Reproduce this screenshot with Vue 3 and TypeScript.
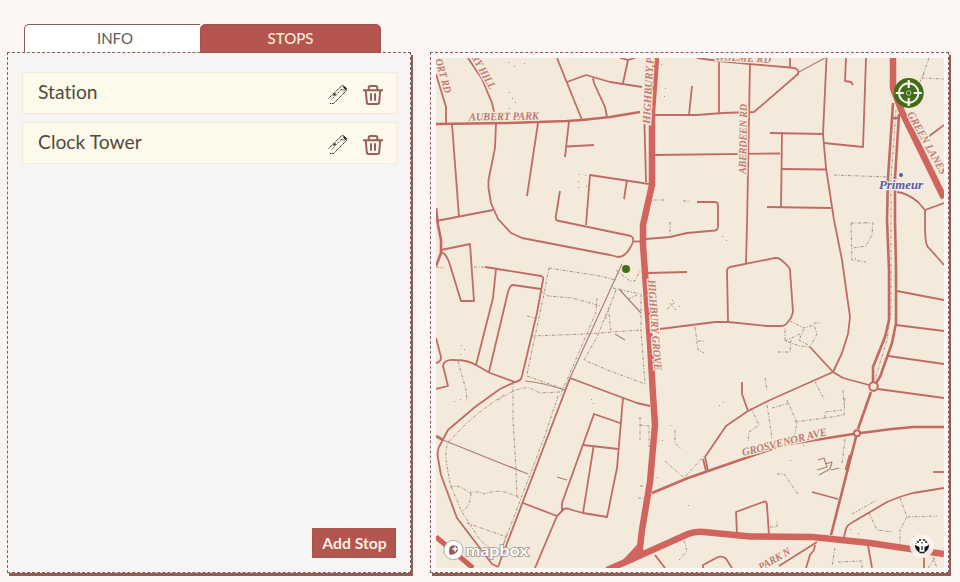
<script setup lang="ts">
import { ref } from 'vue'

interface Stop { id: number; name: string }
interface Label { text: string; x: number; y: number; angle: number; width: number; size: number }

const activeTab = ref<'info' | 'stops'>('stops')
const stops = ref<Stop[]>([
  { id: 1, name: 'Station' },
  { id: 2, name: 'Clock Tower' },
])

const removeStop = (id: number) => {
  stops.value = stops.value.filter((s) => s.id !== id)
}
const addStop = () => {
  stops.value.push({ id: Date.now(), name: 'New stop' })
}

// Residential streets
const streets: string[] = [
  'M436 74L446 107V123', 'M468 58L482 79L492 103L494 112',
  'M557 58L582 120', 'M567 82L586 75L610 82L642 87', 'M593 78L594 83L605 107L607 117',
  'M452 124L459 217', 'M496 124L495 148L488.500 180V188L491 203L498 219L511 233L522 238L610 255L618 257Q625 257 630 248Q636 239 631 236L557 220.500Q555 219 556 215L560 191',
  'M538 123L527 196', 'M569 121L565 157', 'M567 146.500L594 145', 'M586 225L590 175L649 184', 'M627 180L624 199',
  'M436 221L493 210', 'M441 250L470 244L474 301H461L450 265Q446 252 441 253',
  'M485 267L541 276Q544 277 543 280L537 313L522 376Q521 381 515 382L500 389L475 407L448 430L439 447Q437 452 438 458L441 475L457 518L492 564L498 567',
  'M496 269L493 298L476 365', 'M541 289L513 285Q510 285 508 292L489 372',
  'M436 389L448 386L443 366Q444 359 455 360Q468 360 476 365L490 373L515 382', 'M436 338L441 357Q441 362 436 363',
  'M570 378L498 567', 'M570 378L610 393L637 403L650 406',
  'M620 423L594 414L562 503L562 510Q566 507 572 510L583 513L607 517L617 468L623 398', 'M583 445L618 449', 'M593.500 447L583 513',
  'M523 503L557 516L564 509', 'M557 516L535 568',
  'M620 58L628 60L635 58', 'M628 60L623 83', 'M644.500 124L646 182',
  'M655 115H697L723 113L754 112L798 74Q800 68 790 67.500L750 64L719 61L697 58', 'M790 68V58',
  'M692 86L689 115', 'M719 61V113', 'M750 64L747 225L746 263', 'M655 155L780 153.500',
  'M770 133L823 134', 'M782 132L781 207', 'M767 207L831 208', 'M782 169L826 169.500',
  'M826.500 58L823 134L826 168L834 220L842 260L850 317L848 334L842 353L833 372',
  'M866 58L863 147L824 143', 'M846 58L845 81L851 82L853 85', 'M928 137L944 125',
  'M897 192Q907 193 918 202L925 210V225Q925 244 928 247L937 257L944 265', 'M925 210L944 203',
  'M897 291L944 300', 'M896 325L944 331', 'M888 356L944 364', 'M878 389L944 398',
  'M869 385L843 378L833 372L770 400L748 411L726 426L705 457L708 471', 'M810 347L833 372', 'M742 382V394L748 411', 'M703 459L706 471',
  'M933 472H944', 'M812 492L838 499', 'M844 537L846 529Q847 525 853 522L870 512L887 502Q901 496 913 493L944 488',
  'M737 534L736 512L763 502Q767 500 767 506L769 535', 'M655 555L665 568', 'M703 568V565L718 557Q725 555 728 562L732 568',
  'M779 566L817 542', 'M815 545L814 550L810 555L806 568', 'M868 545L872 568', 'M924 557V568',
  'M646 239L670 237L687 233L715 230.500Q718 230 718 226V205Q718 202 714 202H697', 'M634 241.500H643', 'M648 273L687 272',
  'M660 329L715 322H728L767 326H780Q785 326 787 323L791 318L793 312L790 270Q790 267 780 259Q777 257 770 259L730 267Q727 268 727 271L728 321',
]

// Wider local roads
const roads: string[] = [
  'M436 124L507 123L567 121L582 120L610 117L640 112', 'M893 103L888 178L887 220L889 270V320L885 337L873 367V382',
  'M899 114L895 178V220L896 270V323L892 343L880 377L876 383', 'M893 118H899',
  'M436 208L438 225L441 240V253L436 266', 'M436 436L443 440',
  'M652 493L688 478L780 446L790 444L853 434L892 429L913 427H944',
  'M871 392L858 429', 'M856 437L831 535', 'M850 455L846 470',
]

// Arterial roads
const mains: string[] = [
  'M656 58L652 112V185L643 225V245L650 343L653 395L655 425L650 482L642 530L640 548L630 561',
  'M607 570L630 560L688 534Q695 531 704 532L750 536.500L813 537L870 543L944 554',
  'M893 58V88L902 112L944 198',
]

const lanes: string[] = [
  'M622 264L600 312L570 378', 'M443 440L528 474', 'M799 72L825 58', 'M557 477L567 480', 'M525 381Q540 382 565 390',
  'M619 289L641 313', 'M615 334L625 340', 'M818 460L824 458L827 467L817 470M825 464L832 462L830 469L819 475M831 470L839 468',
]

// Footpaths, drawn as broken lines
const footpaths: string[] = [
  'M474 267L485 267', 'M436 267L444 268', 'M549 268L600 276L616 280', 'M549 268L544 294L527 374', 'M527 376L566 390',
  'M541 291L548 296L572 298L601 306', 'M531 336L586 334L641 330', 'M597 298L596 312L580 350L560 396', 'M609 307L597 337L584 360L610 371L645 384',
  'M641 294V330L645 384', 'M613 288L640 294', 'M616 290L605 320', 'M609 314L611 332', 'M616 270L630 281H635L640 271', 'M628 299L637 295',
  'M498 400Q522 384 532 389L540 393L560 392', 'M513 382V420L516 470L517 497', 'M558 396L544 438L504 543', 'M504 395Q485 407 468 422L450 440Q445 445 446 460L450 484L462 512L480 540L492 550H502L507 532',
  'M450 487Q460 484 469 493Q474 490 485 494Q501 487 519 498', 'M471 493Q470 509 461 511', 'M467 523L504 536', 'M458 361L466 390L467 402',
  'M654 200H665', 'M683 201H689', 'M670 222V237', 'M695 327L698 350L704 353M698 341H704',
  'M834 175L887 177', 'M896 110L891 178L891 310L887 340L875 379', 'M929 58L922 78L944 79M924 73L920 82',
  'M851 223L852 260L866 262M873 222L872 235L866 246L853 248M851 223H871',
  'M640 417V440M640 425L649 426V447', 'M665 461L684 478L704 456', 'M675 430L675 443L681 449', 'M682 534L687 551L679 560',
  'M790 321L804 328L814 325L817 334L810 347L800 346L785 341V328M804 329L799 340M814 323H820M778 352H790L791 340M785 341L800 334M799 340L808 345',
  'M815 382L824 399', 'M843 390L844 405', 'M751 408L759 425L749 432L748 441', 'M767 405L772 438', 'M787 400L797 423L795 434M772 408L790 403M795 422L825 418L844 415L845 397M825 418V412L842 410',
  'M845 439L842 464', 'M852 514L877 500', 'M869 513L877 530L893 532', 'M900 498L907 517L937 516M907 517L900 530V544', 'M835 548L832 566M838 562L862 561V568', 'M770 527H777V521',
  'M777 474H784L798 494', 'M765 378L767 390', 'M933 557L937 568M928 568L937 555', 'M527 316L535 318', 'M640 486H644M638 498H643', 'M670 303L676 310M667 309L675 302',
]

const specks: [number, number][] = [
  [508, 62], [514, 66], [524, 63], [509, 92], [512, 98], [515, 102], [509, 108], [579, 174], [585, 175], [578, 181], [586, 186], [578, 187], [661, 64],
  [665, 88], [664, 96], [670, 222], [461, 345], [464, 349], [460, 354], [454, 401], [460, 399], [591, 399], [593, 403], [722, 236], [726, 240], [723, 402], [719, 405],
  [670, 425], [672, 300], [679, 306], [657, 477], [662, 440], [688, 505], [947, 475], [855, 258], [864, 222], [790, 460], [803, 445], [947, 476], [850, 529], [858, 533],
]

const labels: Label[] = [
  { text: 'AUBERT PARK', x: 469, y: 120.5, angle: -1, width: 70, size: 11 },
  { text: 'ORT RD', x: 435, y: 60, angle: 74, width: 35, size: 11 },
  { text: 'RY HILL', x: 471, y: 57, angle: 60, width: 38, size: 11 },
  { text: 'HIGHBURY PA', x: 650, y: 124, angle: -87, width: 73, size: 11 },
  { text: 'ABERDEEN RD', x: 746, y: 174, angle: -89, width: 70, size: 11 },
  { text: 'HOLME RD', x: 716, y: 60, angle: 3, width: 55, size: 11 },
  { text: 'GREEN LANES', x: 907, y: 114, angle: 61, width: 70, size: 11 },
  { text: 'HIGHBURY GROVE', x: 648, y: 280, angle: 86, width: 91, size: 11 },
  { text: 'GROSVENOR AVE', x: 743, y: 456, angle: -14, width: 87, size: 11 },
  { text: 'PARK N', x: 761, y: 571, angle: -30, width: 35, size: 11 },
]
</script>

<template>
  <main class="page">
    <section class="left">
      <nav class="tabs">
        <button class="tab" :class="{ active: activeTab === 'info' }" @click="activeTab = 'info'">INFO</button>
        <button class="tab" :class="{ active: activeTab === 'stops' }" @click="activeTab = 'stops'">STOPS</button>
      </nav>
      <div class="panel stops">
        <ul class="list">
          <li v-for="stop in stops" :key="stop.id" class="stop">
            <span class="name">{{ stop.name }}</span>
            <button class="icon" aria-label="Edit">
              <svg width="20" height="20" viewBox="0 0 20 20" fill="none" stroke="#1d1916">
                <path d="M0 14V19H5L3 15Z" fill="#fff" stroke="none" />
                <path d="M0.500 13.500L13.500 1L15.500 .5L18.500 3.500V5.500L5.500 18.500" stroke-dasharray="1.400 .6" />
                <path d="M3.500 14.500L14.500 3.500L16 6L18 4M12.500 4L15.500 7" stroke-width=".8" stroke-dasharray="1.300 1" />
                <path d="M5.500 10.500L7.500 8.500M15.500 1.500L18 4.500" stroke-width="1.500" />
                <path d="M2 18.500H5.500" stroke-dasharray="1.200 1" />
              </svg>
            </button>
            <button class="icon" aria-label="Delete" @click="removeStop(stop.id)">
              <svg width="20" height="20" viewBox="0 0 20 20" fill="none" stroke="#98605a" stroke-width="2">
                <path d="M0 5.300H20M5.700 5V2.800Q5.700 1 7.500 1H12.500Q14.300 1 14.300 2.800V5M2.800 5.500L3.800 17.500Q4 19 5.500 19H14.500Q16 19 16.200 17.500L17.200 5.500M8 8.300V15.700M12 8.300V15.700" />
              </svg>
            </button>
          </li>
        </ul>
        <button class="add" @click="addStop">Add Stop</button>
      </div>
    </section>

    <section class="panel map-panel">
      <svg class="map" viewBox="436 58 508 510">
        <rect x="436" y="58" width="508" height="510" fill="#f3eadb" />
        <g class="foot"><path v-for="(d, i) in footpaths" :key="i" :d="d" /></g>
        <g class="speck"><rect v-for="(p, i) in specks" :key="i" :x="p[0]" :y="p[1]" width="1" height="1" /></g>
        <g class="lane"><path v-for="(d, i) in lanes" :key="i" :d="d" /></g>
        <g class="street"><path v-for="(d, i) in streets" :key="i" :d="d" /></g>
        <g class="road"><path v-for="(d, i) in roads" :key="i" :d="d" /></g>
        <g class="main-road"><path v-for="(d, i) in mains" :key="i" :d="d" /></g>
        <path d="M634 548L641 540L644 552L630 562L620 563Z" fill="#d1655e" />
        <path d="M436 537L473 568" stroke="#cd605a" stroke-width="5" />
        <g class="circle">
          <circle cx="873.500" cy="386.500" r="4.200" />
          <circle cx="857" cy="433.300" r="3" />
        </g>
        <g class="label">
          <text
            v-for="l in labels" :key="l.text" :font-size="l.size" :textLength="l.width" lengthAdjust="spacingAndGlyphs"
            :transform="`translate(${l.x} ${l.y}) rotate(${l.angle})`"
          >{{ l.text }}</text>
        </g>
        <circle cx="901" cy="175" r="2" fill="#5c5c98" />
        <text class="place" x="879" y="189" textLength="44" lengthAdjust="spacingAndGlyphs">Primeur</text>
        <circle cx="626" cy="269" r="4" fill="#42701a" />

        <g transform="translate(908.700 93)">
          <circle r="15" fill="#436d18" />
          <circle r="9.700" fill="none" stroke="#f5f5e8" stroke-width="2" />
          <path d="M0 -13V-5M0 13V5M-13 0H-5M13 0H5" stroke="#f5f5e8" stroke-width="2.200" />
          <circle r="2.300" fill="none" stroke="#c3cfae" stroke-width="1" />
        </g>

        <g class="brand">
          <circle cx="453.500" cy="550" r="9.600" fill="#fff" stroke="#a6968e" stroke-width=".8" />
          <path d="M449.500 554.500Q448 548 451 546Q454 544.500 457 546.500Q459 549 457 552Q454 555.500 449.500 554.500Z" fill="#9a5b57" />
          <path d="M455 545.500L456 548L458.500 549L456 550L455 552.500L454 550L451.500 549L454 548Z" fill="#fff" />
          <text x="465.500" y="555.500" textLength="63" lengthAdjust="spacingAndGlyphs">mapbox</text>
        </g>

        <g transform="translate(922 546)">
          <circle r="12" fill="#faf3ef" fill-opacity=".9" />
          <circle r="6.500" fill="#fff" stroke="#5a504a" stroke-width=".8" stroke-dasharray="1 1.200" />
          <path d="M-7 -1L-2.500 1V6.500Q-7 4 -7 -1ZM7 -1L2.500 1V6.500Q7 4 7 -1Z" fill="#111" />
          <path d="M-5 -4H-3M3 -4H5M-3 -6H-1M1 -6H3M0 -4V-2.500M-2.500 6.500H2.500M0 0V4" stroke="#222" stroke-width="1.300" />
        </g>
      </svg>
    </section>
  </main>
</template>

<style>
body {
  margin: 0;
  background: #fbf6f4;
}
</style>

<style scoped>
.page {
  box-sizing: border-box;
  width: 960px;
  height: 582px;
  padding: 24px 11px 9px 7px;
  display: flex;
  align-items: flex-end;
  gap: 19px;
  overflow: hidden;
  font-family: Lato, "Liberation Sans", sans-serif;
}
button {
  font-family: inherit;
  cursor: pointer;
}
.left {
  width: 404px;
  height: 549px;
  display: flex;
  flex-direction: column;
  flex: none;
}
.tabs {
  display: flex;
  height: 28px;
  margin-left: 17px;
}
.tab {
  box-sizing: border-box;
  width: 176px;
  height: 28px;
  padding: 0 0 0 5px;
  border: 1px solid #84605c;
  border-bottom: 0;
  border-right: 0;
  border-radius: 5px 0 0 0;
  background: #fff;
  color: #5c5a54;
  font-size: 15px;
  line-height: 27px;
}
.tab + .tab {
  width: 181px;
  padding: 0;
  border-radius: 5px 5px 0 0;
}
.tab.active {
  position: relative;
  height: 29px;
  border: 1px solid #a2554f;
  background: #b4564f;
  color: #f9ebdf;
  font-weight: 500;
}
.panel {
  box-sizing: border-box;
  height: 521px;
  border: 1px dashed #84605c;
  box-shadow: 2px 3px 0 #915c57;
}
.stops {
  display: flex;
  flex-direction: column;
  justify-content: space-between;
  padding: 19px 13px 14px 14px;
  background: #f6f5f4;
}
.list {
  display: flex;
  flex-direction: column;
  gap: 8px;
  margin: 0;
  padding: 0;
  list-style: none;
}
.stop {
  box-sizing: border-box;
  height: 42px;
  display: flex;
  align-items: center;
  padding: 0 13px 0 15px;
  border: 1px solid #f4e9db;
  background: #fdfaeb;
}
.name {
  flex: 1;
  padding-bottom: 3px;
  color: #504b40;
  font-size: 19.300px;
  font-variant-ligatures: none;
  line-height: 37px;
}
.icon {
  display: flex;
  margin: 4px 0 0 15px;
  padding: 0;
  border: 0;
  background: none;
}
.add {
  align-self: flex-end;
  width: 84px;
  height: 30px;
  margin-right: 1px;
  padding: 0 0 1px 1px;
  border: 1px solid #a9544e;
  background: #b3564f;
  color: #faefe3;
  font-size: 15.700px;
  font-weight: 700;
}
.map-panel {
  flex: none;
  width: 519px;
  padding: 5px 0 5px 5px;
  background: #fcf7f5;
}
.map {
  display: block;
  width: 508px;
  height: 510px;
}
.map path {
  stroke-linejoin: round;
}
.foot, .lane, .street, .road, .main-road {
  fill: none;
}
.foot {
  stroke: #af9085;
  stroke-width: 1;
  stroke-dasharray: 3 1.500 1 1.500;
}
.speck {
  fill: #ab9484;
}
.lane {
  stroke: #ac8178;
  stroke-width: 1.200;
}
.street {
  stroke: #bf6c65;
  stroke-width: 1.800;
}
.road {
  stroke: #c36962;
  stroke-width: 2.600;
}
.main-road {
  stroke: #d1655e;
  stroke-width: 6.500;
}
.circle {
  fill: #f3eadb;
  stroke: #c5635c;
  stroke-width: 2;
}
.label {
  fill: #c07a72;
  stroke: #f3eadb;
  stroke-width: 2.500;
  paint-order: stroke;
  font-family: "Liberation Serif", serif;
  font-style: italic;
  font-weight: 700;
}
.place {
  fill: #5c5c98;
  stroke: #f1edf0;
  stroke-width: 2.500;
  paint-order: stroke;
  font: italic 700 12.5px "Liberation Serif", serif;
}
.brand text {
  fill: #fff;
  stroke: #9f928b;
  stroke-width: 1.600;
  paint-order: stroke;
  font: 700 16px Lato, sans-serif;
}
</style>
